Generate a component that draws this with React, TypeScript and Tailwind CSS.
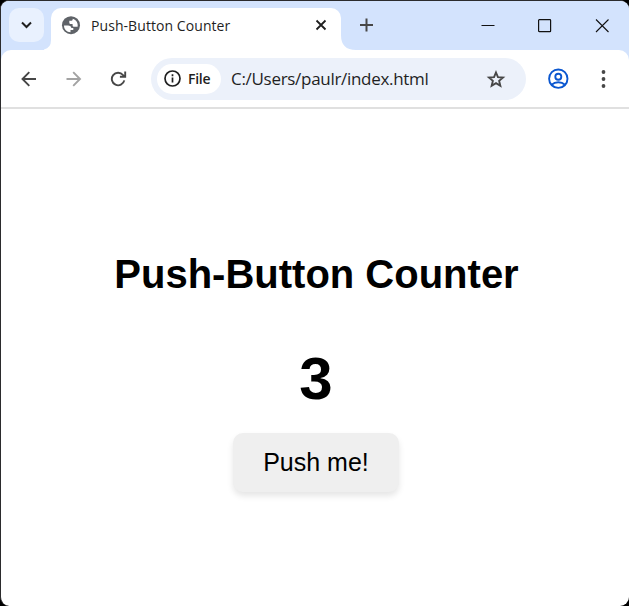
import React from "react";

const uiFont = "font-['Segoe_UI','Open_Sans',sans-serif]";

function TabStrip() {
  return (
    <div className="flex h-[49px] shrink-0 bg-[#d3e3fd]">
      <div className="ml-2 mt-[7px] flex h-[34px] w-[35px] items-center justify-center rounded-[10px] bg-[#e9f1fe]">
        <svg width="12" height="8" viewBox="0 0 12 8" fill="none" stroke="#1f1f1f" strokeWidth="2">
          <path d="M1 1.500 5.500 6l4.500-4.500" />
        </svg>
      </div>
      <div className="flex w-[7px] items-end">
        <svg width="7" height="10" viewBox="0 0 7 10">
          <path d="M7 0v10H0V9.500Q7 8 7 0Z" fill="#fff" />
        </svg>
      </div>
      <div className="mt-[7px] flex h-[42px] w-[290px] items-start rounded-t-[10px] bg-white">
        <svg className="ml-[10px] mt-2 shrink-0" width="20" height="20" viewBox="0 0 20 20">
          <circle cx="10" cy="9.200" r="9" fill="#5f6368" />
          <path d="M3 9.500h4c2.100 0 3.300 1 3.300 2.600h2v2H9.500v2.100C5.700 16.200 3 13.400 3 9.500ZM11.700 2.700v.5c0 1-.8 1.600-2 1.600H8.300v1.700c0 1 .7 1.500 2 1.500h1.300v1.200c0 1 .7 1.600 1.800 1.600h3.200c.7-3.800-1.300-7.100-4.900-8.100Z" fill="#fff" />
        </svg>
        <span className={`${uiFont} ml-[10px] mt-[7px] w-[220px] whitespace-nowrap text-[14px] leading-[22px] tracking-[0.07px] text-[#1f1f1f]`}>
          Push-Button Counter
        </span>
        <svg className="ml-1 mt-[11px] shrink-0" width="12" height="12" viewBox="0 0 12 12" stroke="#1f1f1f" strokeWidth="1.800">
          <path d="m1.500 1.500 9 9m0-9-9 9" />
        </svg>
      </div>
      <div className="flex w-4 items-end">
        <svg width="15" height="15" viewBox="0 0 15 15">
          <path d="M0 0v15h15Q0 15 0 0Z" fill="#fff" />
        </svg>
      </div>
      <svg className="ml-[2px] mt-[17px] shrink-0" width="14" height="14" viewBox="0 0 14 14" stroke="#474747" strokeWidth="2">
        <path d="M7.500.5v13M1 7h13" />
      </svg>
      <svg className="ml-[108px] mt-[18px] shrink-0" width="14" height="14" viewBox="0 0 14 14" stroke="#111" strokeWidth="1">
        <path d="M.5 6.500h13" />
      </svg>
      <svg className="ml-[43px] mt-[18px] shrink-0" width="14" height="14" viewBox="0 0 14 14" fill="none" stroke="#111">
        <rect x=".6" y=".6" width="12" height="12" rx=".7" strokeWidth="1.200" />
      </svg>
      <svg className="ml-[43px] mt-[18px] shrink-0" width="14" height="14" viewBox="0 0 14 14" stroke="#111" strokeWidth="1.100">
        <path d="m1 .5 12.500 12.500m0-12.500L1 13" />
      </svg>
    </div>
  );
}

function Toolbar() {
  return (
    <div className="shrink-0 bg-[#d3e3fd]">
      <div className="flex h-[57px] items-center rounded-t-[10px] bg-white">
        <svg className="ml-5 shrink-0" width="16" height="16" viewBox="0 0 16 16" fill="none" stroke="#474747" strokeWidth="1.900">
          <path d="M15 8H2M8.300 1.200 1.500 8l6.800 6.800" />
        </svg>
        <svg className="ml-[29px] shrink-0" width="16" height="16" viewBox="0 0 16 16" fill="none" stroke="#a3a3a3" strokeWidth="1.900">
          <path d="M.5 8h13.500M7.200 1.200 14 8l-6.800 6.800" />
        </svg>
        <svg className="ml-[28px] shrink-0" width="18" height="16" viewBox="0 0 18 16" fill="none" stroke="#474747" strokeWidth="1.900">
          <path d="M14.300 9.400A6.300 6.300 0 1 1 13 4L14.500 5.800M15.200.5v5.300H9.900" />
        </svg>
        <div className="ml-[23px] flex h-[42px] w-[375px] items-center rounded-full bg-[#ecf1fa]">
          <div className="ml-[6px] flex h-[30px] w-[64px] items-center rounded-full bg-white">
            <svg className="ml-[7px] shrink-0" width="17" height="17" viewBox="0 0 17 17" fill="none" stroke="#1f1f1f">
              <circle cx="8.500" cy="8.500" r="7.500" strokeWidth="1.700" />
              <path d="M8.500 7.600v5M8.500 4.300v1.900" strokeWidth="1.700" />
            </svg>
            <span className={`${uiFont} ml-[7px] text-[14px] font-semibold leading-5 tracking-[-0.25px] text-[#1f1f1f]`}>File</span>
          </div>
          <span className={`${uiFont} ml-[10px] mt-px w-[254px] whitespace-nowrap text-[17px] leading-6 tracking-[-0.3px] text-[#1f1f1f]`}>
            C:/Users/paulr/index.html
          </span>
          <svg className="shrink-0" width="22" height="22" viewBox="0 0 22 22" fill="none" stroke="#474747" strokeWidth="1.900">
            <path d="m11 4.500 1.950 4.700 5.050.4-3.850 3.300 1.200 4.950L11 15.200l-4.350 2.650 1.200-4.950L4 9.600l5.050-.4Z" />
          </svg>
        </div>
        <svg className="ml-[21px] shrink-0" width="22" height="22" viewBox="0 0 22 22" fill="none" stroke="#0b57d0" strokeWidth="1.900">
          <circle cx="11.300" cy="10.700" r="9.200" />
          <circle cx="11.300" cy="8.700" r="3" />
          <path d="M4.600 16.700c3.700-3.300 9.700-3.300 13.400 0" />
        </svg>
        <svg className="ml-8 shrink-0" width="5" height="18" viewBox="0 0 5 18" fill="#474747">
          <circle cx="2.500" cy="2" r="1.900" />
          <circle cx="2.500" cy="9" r="1.900" />
          <circle cx="2.500" cy="16" r="1.900" />
        </svg>
      </div>
      <div className="h-[2px] bg-[#e0e0e0]" />
    </div>
  );
}

export default function App() {
  const [count, setCount] = React.useState(3);
  return (
    <div className="h-[606px] w-[629px] overflow-hidden bg-black">
      <div className="flex h-full flex-col overflow-hidden rounded-[9px] border-l border-t border-[#2b2b2d] bg-white">
        <TabStrip />
        <Toolbar />
        <main className="flex flex-1 flex-col items-center pl-[2px] font-['Liberation_Sans',Arial,sans-serif] text-black">
          <h1 className="mt-[142px] whitespace-nowrap pl-px text-[40px] font-bold leading-[46px]">Push-Button Counter</h1>
          <div className="mt-[47px] text-[60px] font-bold leading-[70px]">{count}</div>
          <button
            className="mt-[19px] h-[59px] w-[166px] rounded-[10px] bg-[#efefef] text-[25px] shadow-[0_4px_6px_rgba(0,0,0,0.1)]"
            onClick={() => setCount(count + 1)}
          >
            Push me!
          </button>
        </main>
      </div>
    </div>
  );
}
